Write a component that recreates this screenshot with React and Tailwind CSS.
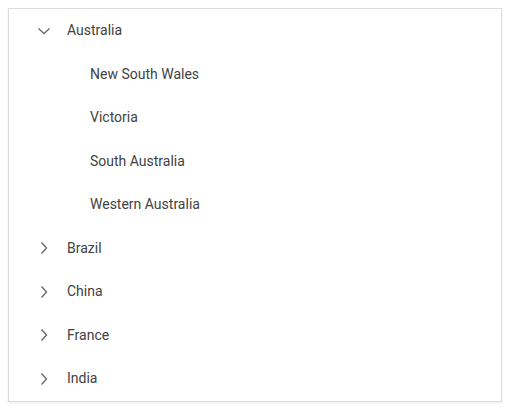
import React from 'react';

const Chevron = ({ open }) => (
  <svg width="16" height="16" viewBox="0 0 16 16" className="text-[#6b6b6b]">
    {open ? (
      <path d="M2.5 5.5 L8 10.5 L13.5 5.5" fill="none" stroke="currentColor" strokeWidth="1.4" />
    ) : (
      <path d="M5.5 2.5 L10.5 8 L5.5 13.5" fill="none" stroke="currentColor" strokeWidth="1.4" />
    )}
  </svg>
);

const countries = [
  { name: 'Australia', open: true, states: ['New South Wales', 'Victoria', 'South Australia', 'Western Australia'] },
  { name: 'Brazil' },
  { name: 'China' },
  { name: 'France' },
  { name: 'India' },
];

const App = () => {
  return (
    <div className="p-2 bg-white" style={{ fontFamily: 'Roboto, "Liberation Sans", sans-serif' }}>
      <div className="w-[494px] border border-[#dcdcdc] shadow-[0_1px_2px_rgba(0,0,0,0.08)] bg-white">
        {countries.map((c) => (
          <div key={c.name}>
            <div className="h-[43.5px] flex items-center text-[14px] text-[#424242]">
              <div className="w-[58px] flex justify-end pr-[15px]">
                <Chevron open={c.open} />
              </div>
              <span>{c.name}</span>
            </div>
            {c.open &&
              c.states.map((s) => (
                <div key={s} className="h-[43.5px] flex items-center pl-[81px] text-[14px] text-[#424242]">
                  {s}
                </div>
              ))}
          </div>
        ))}
      </div>
    </div>
  );
};

export default App;
